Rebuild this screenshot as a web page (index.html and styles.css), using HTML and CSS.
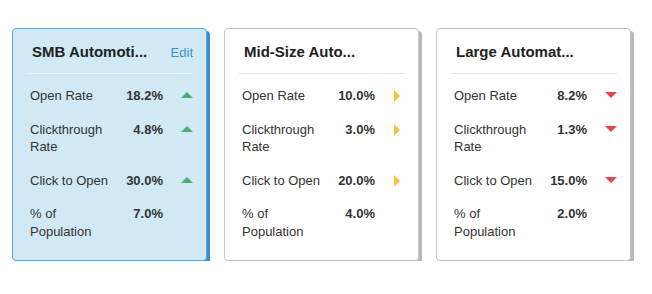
FILE: index.html
```html
<!DOCTYPE html>
<html>
<head>
  <title>Segment Metrics</title>
  <link rel="stylesheet" href="styles.css">
</head>
<body>

<div class="cards">

  <div class="card selected">
    <div class="card-head">
      <span class="title">SMB Automoti...</span>
      <a class="edit" href="#">Edit</a>
    </div>
    <div class="rows">
      <div class="label">Open Rate</div><div class="value">18.2%</div><div class="trend"><span class="up"></span></div>
      <div class="label">Clickthrough Rate</div><div class="value">4.8%</div><div class="trend"><span class="up"></span></div>
      <div class="label">Click to Open</div><div class="value">30.0%</div><div class="trend"><span class="up"></span></div>
      <div class="label">% of Population</div><div class="value">7.0%</div><div class="trend"></div>
    </div>
  </div>

  <div class="card">
    <div class="card-head">
      <span class="title">Mid-Size Auto...</span>
    </div>
    <div class="rows">
      <div class="label">Open Rate</div><div class="value">10.0%</div><div class="trend"><span class="flat"></span></div>
      <div class="label">Clickthrough Rate</div><div class="value">3.0%</div><div class="trend"><span class="flat"></span></div>
      <div class="label">Click to Open</div><div class="value">20.0%</div><div class="trend"><span class="flat"></span></div>
      <div class="label">% of Population</div><div class="value">4.0%</div><div class="trend"></div>
    </div>
  </div>

  <div class="card">
    <div class="card-head">
      <span class="title">Large Automat...</span>
    </div>
    <div class="rows">
      <div class="label">Open Rate</div><div class="value">8.2%</div><div class="trend"><span class="down"></span></div>
      <div class="label">Clickthrough Rate</div><div class="value">1.3%</div><div class="trend"><span class="down"></span></div>
      <div class="label">Click to Open</div><div class="value">15.0%</div><div class="trend"><span class="down"></span></div>
      <div class="label">% of Population</div><div class="value">2.0%</div><div class="trend"></div>
    </div>
  </div>

</div>

</body>
</html>
```

FILE: styles.css
```css
body {
  margin: 0;
  padding: 28px 0 0 12px;
  background: #ffffff;
  font-family: "Liberation Sans", Arial, sans-serif;
  color: #333;
}

.cards {
  display: flex;
  gap: 17px;
}

.card {
  box-sizing: border-box;
  width: 195px;
  height: 233px;
  padding: 0 13px 0 14px;
  background: #ffffff;
  border: 1px solid #c6c6c6;
  border-radius: 4px;
  box-shadow: 3px 3px 0 #b9b9b9;
}

.card.selected {
  background: #d0e9f5;
  border-color: #5aa8dc;
  box-shadow: 3px 3px 0 #3a8ed0;
}

.card-head {
  display: flex;
  justify-content: space-between;
  align-items: center;
  padding: 13px 0 11px 5px;
  border-bottom: 1px solid #e6e6e6;
}

.card.selected .card-head {
  border-bottom-color: #e9f4fa;
}

.title {
  font-size: 15px;
  font-weight: bold;
  line-height: 20px;
  color: #222;
}

.edit {
  font-size: 13px;
  color: #3d8fd1;
  text-decoration: none;
}

.rows {
  display: grid;
  grid-template-columns: 84px 1fr 30px;
  row-gap: 16px;
  padding: 13px 0 0 3px;
  font-size: 13px;
  line-height: 17.5px;
}

.value {
  text-align: right;
  font-weight: bold;
}

.trend {
  display: flex;
  justify-content: flex-end;
  padding-top: 5px;
}

.up {
  width: 0;
  height: 0;
  border-left: 6px solid transparent;
  border-right: 6px solid transparent;
  border-bottom: 6px solid #4bab75;
}

.down {
  width: 0;
  height: 0;
  border-left: 6px solid transparent;
  border-right: 6px solid transparent;
  border-top: 6px solid #e2484a;
}

.flat {
  width: 0;
  height: 0;
  margin-top: -2px;
  margin-right: 5px;
  border-top: 6px solid transparent;
  border-bottom: 6px solid transparent;
  border-left: 6px solid #f3c33f;
}
```
